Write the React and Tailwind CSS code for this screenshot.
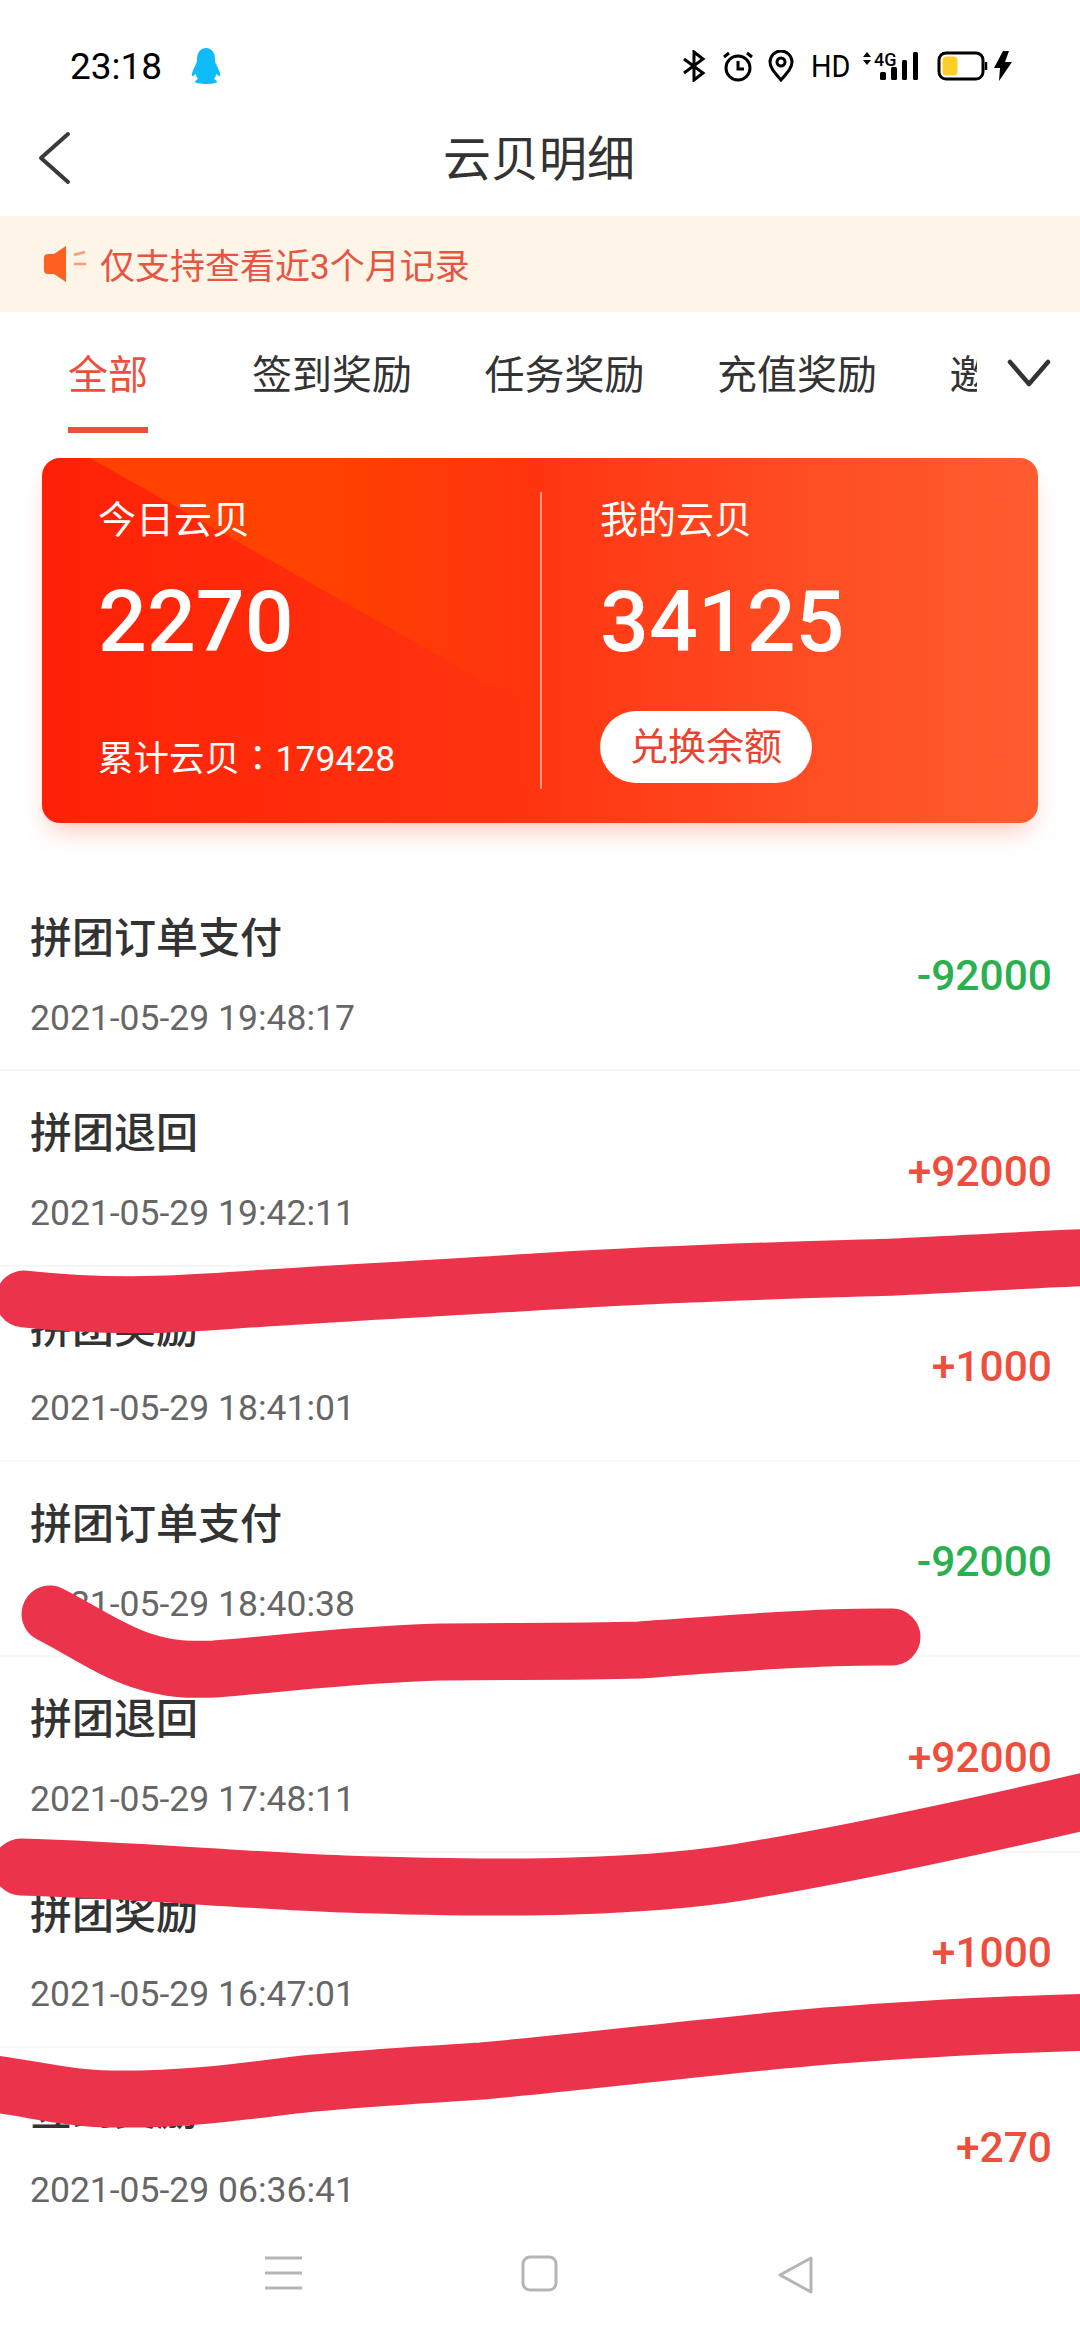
const cjk = "font-['Roboto','Noto_Sans_CJK_SC',sans-serif]"

const tabs = ['签到奖励', '任务奖励', '充值奖励', '邀请奖励']

const rows = [
  { title: '拼团订单支付', time: '2021-05-29 19:48:17', amount: '-92000' },
  { title: '拼团退回', time: '2021-05-29 19:42:11', amount: '+92000' },
  { title: '拼团奖励', time: '2021-05-29 18:41:01', amount: '+1000' },
  { title: '拼团订单支付', time: '2021-05-29 18:40:38', amount: '-92000' },
  { title: '拼团退回', time: '2021-05-29 17:48:11', amount: '+92000' },
  { title: '拼团奖励', time: '2021-05-29 16:47:01', amount: '+1000' },
  { title: '签到奖励', time: '2021-05-29 06:36:41', amount: '+270' },
]

function StatusIcons() {
  return (
    <div className="flex items-center text-black">
      <svg width="24" height="32" viewBox="0 0 24 32" fill="none" stroke="black" strokeWidth="3">
        <path d="M2 9l19 14-9 7V2l9 7L2 23" />
      </svg>
      <svg width="32" height="32" viewBox="0 0 32 32" fill="none" stroke="black" strokeWidth="3" className="ml-[16px]">
        <circle cx="16" cy="18" r="12" />
        <path d="M16 11v8h6M2 7l5-4M30 7l-5-4" />
      </svg>
      <svg width="26" height="32" viewBox="0 0 26 32" fill="none" stroke="black" strokeWidth="3" className="ml-[14px]">
        <path d="M13 30C7 23 2 18 2 12a11 11 0 0 1 22 0c0 6-5 11-11 18z" />
        <circle cx="13" cy="12" r="4" />
      </svg>
      <span className="ml-[17px] w-[36px] text-[32px] leading-none font-['Roboto',sans-serif] scale-x-90 origin-left">HD</span>
      <div className="relative ml-[15px] w-[56px] h-[32px]">
        <svg width="56" height="32" viewBox="0 0 56 32" fill="black" className="absolute left-0 top-0">
          <path d="M1 7l4-5 4 5zM1 10l4 5 4-5z" />
          <rect x="18" y="22" width="6" height="8" rx="1.5" />
          <rect x="29" y="17" width="6" height="13" rx="1.5" />
          <rect x="40" y="10" width="5" height="20" rx="1.5" />
          <rect x="51" y="2" width="5" height="28" rx="1.5" />
        </svg>
        <span className="absolute left-[12px] -top-[2px] text-[18px] leading-[24px] font-['Roboto',sans-serif] font-medium">4G</span>
      </div>
      <svg width="52" height="30" viewBox="0 0 52 30" fill="none" className="ml-[19px]">
        <rect x="2" y="2" width="44" height="26" rx="7" stroke="black" strokeWidth="3" />
        <rect x="5.5" y="5.5" width="15" height="19" rx="4" fill="#FFCE26" />
        <path d="M49 11v8" stroke="black" strokeWidth="2.5" />
      </svg>
      <svg width="20" height="30" viewBox="0 0 20 30" fill="black" className="ml-[4px]">
        <path d="M10 0L1 17h6l-1 13 13-19h-7l4-11z" />
      </svg>
    </div>
  )
}

function Row({ title, time, amount }) {
  const color = amount[0] === '-' ? 'text-[#2BB04F]' : 'text-[#EE4F3C]'
  return (
    <div className="h-[195.33px] border-b-2 border-[#f7f7f7] pl-[30px] pr-[28px] flex items-center justify-between">
      <div className="flex flex-col">
        <div className="text-[42px] leading-[42px] font-medium text-[#333333] mt-[8px]">{title}</div>
        <div className="text-[35.5px] leading-[35px] text-[#666666] mt-[41px]">{time}</div>
      </div>
      <div className={`text-[42.5px] leading-none font-medium mt-[8px] ${color}`}>{amount}</div>
    </div>
  )
}

export default function App() {
  return (
    <div className={`relative w-[1080px] h-[2340px] bg-white overflow-hidden flex flex-col ${cjk}`}>
      {/* status bar */}
      <div className="h-[100px] pt-[32px] pl-[70px] pr-[67px] flex items-center justify-between shrink-0">
        <div className="flex items-center">
          <span className="text-[37px] leading-none text-black w-[121px]">23:18</span>
          <svg width="30" height="36" viewBox="0 0 30 36" fill="#0FBCF9">
            <path d="M15 0c6 0 9 5 9 11 0 2 0 3 1 5 2 4 5 10 4 12-1 1-3-2-4-2 0 2-1 4-2 5 2 1 3 2 3 3 0 1-6 2-11 2s-11-1-11-2c0-1 1-2 3-3-1-1-2-3-2-5-1 0-3 3-4 2-1-2 2-8 4-12 1-2 1-3 1-5C6 5 9 0 15 0z" />
          </svg>
        </div>
        <StatusIcons />
      </div>

      {/* nav */}
      <div className="h-[116px] relative flex items-center justify-center shrink-0">
        <svg width="34" height="56" viewBox="0 0 34 56" fill="none" stroke="#3a3a3a" strokeWidth="4" strokeLinecap="round" strokeLinejoin="round" className="absolute left-[38px] top-[30px]">
          <path d="M30 4L3 28l27 24" />
        </svg>
        <span className="text-[48px] leading-none text-[#333333] pt-[3px] pr-[2px]">云贝明细</span>
      </div>

      {/* notice */}
      <div className="h-[96px] bg-[#FEF5E8] flex items-center pl-[44px] shrink-0">
        <svg width="44" height="36" viewBox="0 0 44 36" fill="#FF6020">
          <path d="M0 12q0-4 4-4h6L22 0v36L10 28H4q-4 0-4-4z" />
          <path d="M30 9l11-3M30 18h12" stroke="#FF9A70" strokeWidth="2.5" fill="none" />
        </svg>
        <span className="ml-[12px] pt-[6px] text-[35px] leading-none text-[#E8543F]">仅支持查看近3个月记录</span>
      </div>

      {/* tabs */}
      <div className="h-[121px] flex shrink-0">
        <div className="w-[977px] overflow-hidden flex pl-[68px]">
          <div className="h-full shrink-0 flex items-center pt-[6px] border-y-[6px] border-t-transparent border-b-[#EE4F3C] text-[40px] text-[#EE4F3C] mr-[104px]">全部</div>
          <div className="flex gap-[72.5px] shrink-0">
            {tabs.map((t) => (
              <div key={t} className="h-full shrink-0 flex items-center pt-[6px] text-[40px] text-[#333333]">{t}</div>
            ))}
          </div>
        </div>
        <div className="flex-1 flex items-center pl-[30px]">
          <svg width="44" height="28" viewBox="0 0 44 28" fill="none" stroke="#333333" strokeWidth="4.5" strokeLinecap="round" strokeLinejoin="round">
            <path d="M3 3l19 22L41 3" />
          </svg>
        </div>
      </div>

      {/* card */}
      <div className="relative mx-[42px] mt-[25px] h-[365px] shrink-0 rounded-[18px] overflow-hidden bg-gradient-to-r from-[#FF2006] via-[#FF3510] via-50% to-[#FF5C2F] shadow-[0_14px_26px_-8px_rgba(255,80,40,0.35)] flex">
        <svg width="560" height="300" viewBox="0 0 560 300" className="absolute left-0 top-0">
          <defs>
            <linearGradient id="wedge" x1="0" y1="0" x2="1" y2="0">
              <stop offset="0" stopColor="#FF4200" />
              <stop offset="0.45" stopColor="#FF4200" />
              <stop offset="0.88" stopColor="#FF4200" stopOpacity="0" />
            </linearGradient>
          </defs>
          <polygon points="48,0 560,0 560,290" fill="url(#wedge)" />
        </svg>
        <div className="relative w-[500px] my-[34px] border-r-2 border-white/50 pl-[56px] flex flex-col text-white">
          <div className="text-[38px] leading-none mt-[9px]">今日云贝</div>
          <div className="text-[86px] leading-none font-medium mt-[40px]">2270</div>
          <div className="text-[35.5px] leading-none mt-[73px]">累计云贝<span className="font-['Noto_Sans_CJK_TC']">：</span>179428</div>
        </div>
        <div className="relative pl-[58px] pt-[43px] flex flex-col items-start text-white">
          <div className="text-[38px] leading-none">我的云贝</div>
          <div className="text-[86px] leading-none font-medium mt-[40px]">34125</div>
          <div className="h-[72px] w-[212px] rounded-full bg-white text-[#E8432F] text-[38px] flex items-center justify-center mt-[46px]">兑换余额</div>
        </div>
      </div>

      {/* list */}
      <div className="mt-[53px] flex flex-col shrink-0">
        {rows.map((r) => (
          <Row key={r.time} {...r} />
        ))}
      </div>

      {/* bottom nav */}
      <div className="absolute left-0 right-0 bottom-0 h-[99px] bg-white flex items-start pt-[14px]">
        <div className="flex w-full justify-between pl-[265px] pr-[266px]">
          <svg width="37" height="37" viewBox="0 0 37 37" fill="none" stroke="#B5B5B5" strokeWidth="3">
            <path d="M0 3h37M0 18h37M0 33h37" />
          </svg>
          <svg width="37" height="37" viewBox="0 0 37 37" fill="none" stroke="#B5B5B5" strokeWidth="3">
            <rect x="2" y="2" width="33" height="33" rx="7" />
          </svg>
          <svg width="37" height="40" viewBox="0 0 37 40" fill="none" stroke="#B5B5B5" strokeWidth="3" strokeLinejoin="round">
            <path d="M34 3L3 20l31 17z" />
          </svg>
        </div>
      </div>

      {/* scribbles drawn over the screenshot */}
      <svg width="1080" height="2340" viewBox="0 0 1080 2340" fill="none" stroke="#EB344B" strokeWidth="57" strokeLinecap="round" strokeLinejoin="round" className="absolute left-0 top-0 pointer-events-none">
        <path d="M24 1299C90 1306 150 1306 207 1302C320 1294 440 1288 551 1281C700 1272 800 1270 895 1267C960 1264 1020 1260 1100 1257" />
        <path d="M50 1614C85 1632 110 1650 140 1660C170 1670 190 1670 215 1669C300 1662 360 1654 440 1652C500 1651 570 1652 640 1650C720 1644 820 1636 892 1637" />
        <path d="M21 1867C130 1870 240 1880 344 1884C430 1887 510 1888 572 1886C640 1884 700 1880 758 1869C860 1852 970 1828 1100 1798" />
        <path d="M-20 2082C30 2088 70 2099 110 2099C180 2100 240 2092 295 2085C350 2079 420 2075 482 2071C600 2060 720 2045 826 2036C920 2029 1000 2024 1100 2022" />
      </svg>
    </div>
  )
}
